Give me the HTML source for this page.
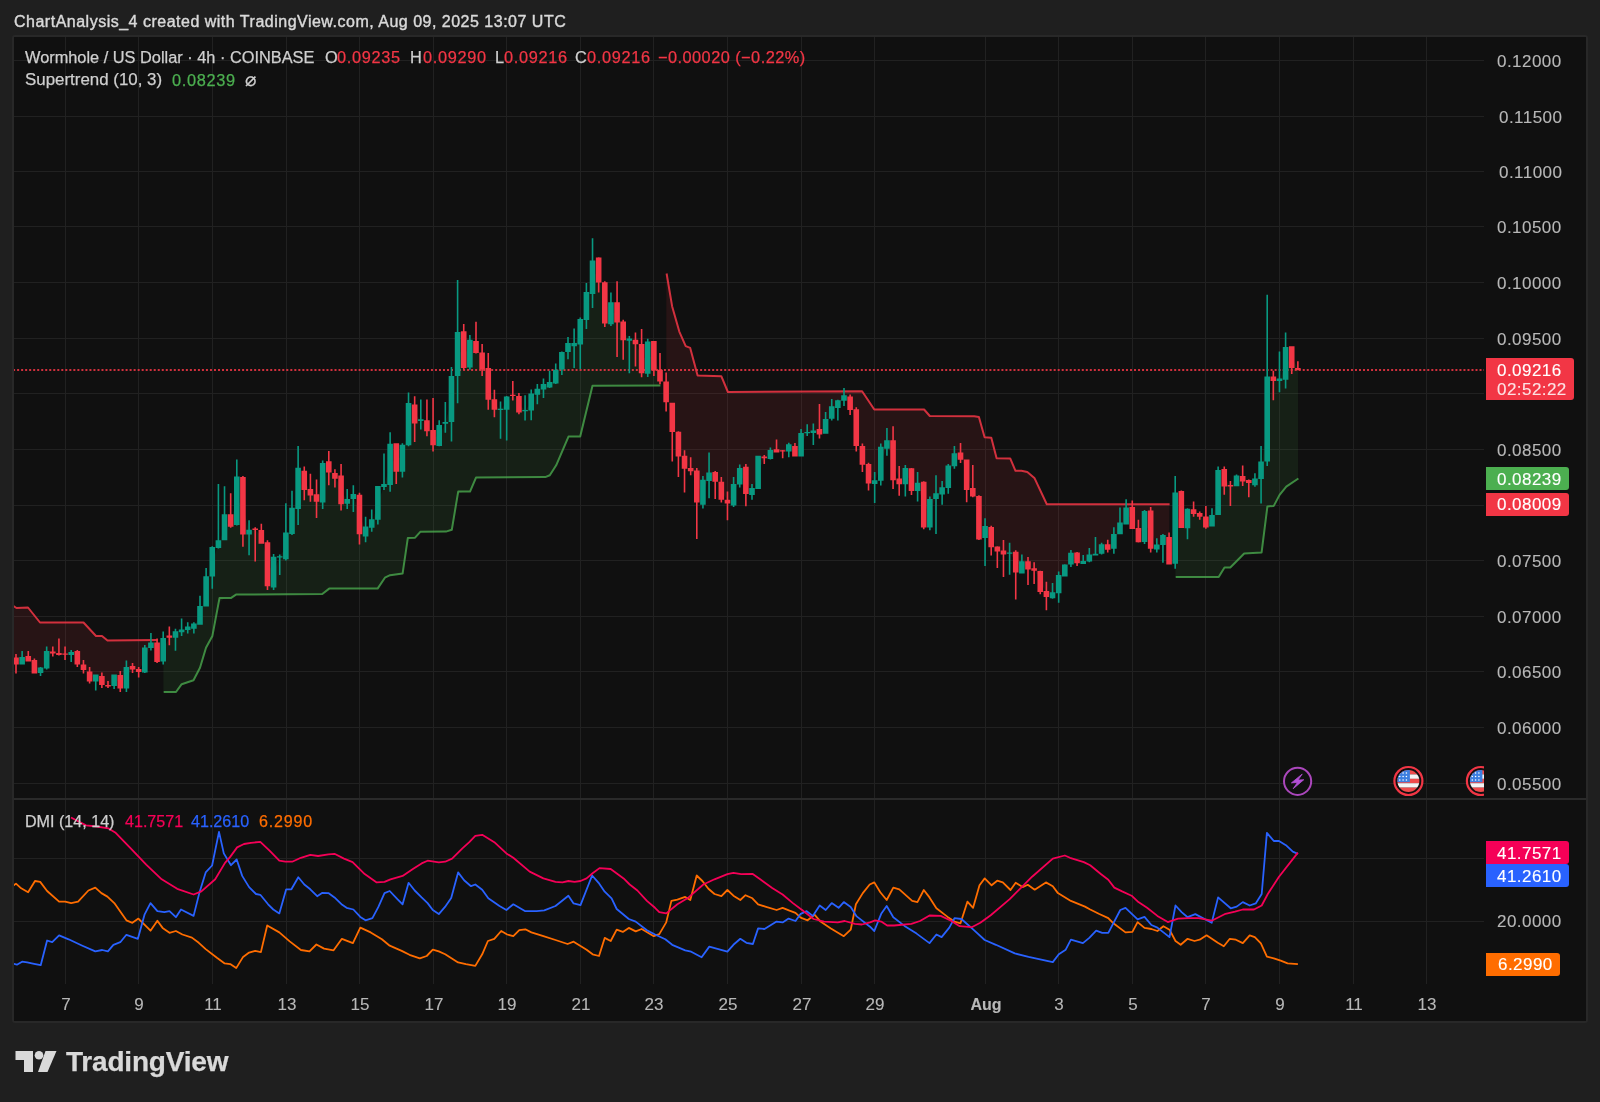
<!DOCTYPE html><html><head><meta charset="utf-8"><style>
html,body{margin:0;padding:0;background:#1f1f1f;width:1600px;height:1102px;overflow:hidden}
*{box-sizing:border-box}
.t{position:absolute;will-change:transform;-webkit-text-stroke:0.25px currentColor;font-family:"Liberation Sans",sans-serif;white-space:pre;line-height:1}
svg{position:absolute;left:0;top:0}

</style></head><body>
<svg width="1600" height="1102" viewBox="0 0 1600 1102">
<defs><clipPath id="cp"><rect x="14" y="37" width="1470" height="762"/></clipPath>
<clipPath id="cd"><rect x="14" y="799" width="1470" height="187"/></clipPath></defs>
<rect x="12" y="35" width="1576" height="988" rx="3" fill="#282828"/>
<rect x="14" y="37" width="1572" height="984" fill="#101010"/>
<path d="M14 60.5H1484M14 116.5H1484M14 171.5H1484M14 226.5H1484M14 282.5H1484M14 338.5H1484M14 393.5H1484M14 449.5H1484M14 505.5H1484M14 560.5H1484M14 616.5H1484M14 671.5H1484M14 727.5H1484M14 783.5H1484M14 858.5H1484M14 921.5H1484M65.5 37V984M138.5 37V984M212.5 37V984M286.5 37V984M359.5 37V984M433.5 37V984M506.5 37V984M580.5 37V984M653.5 37V984M727.5 37V984M801.5 37V984M874.5 37V984M985.5 37V984M1058.5 37V984M1132.5 37V984M1205.5 37V984M1279.5 37V984M1353.5 37V984M1426.5 37V984" stroke="#212121" stroke-width="1" fill="none" shape-rendering="crispEdges"/>
<rect x="14" y="798" width="1572" height="2" fill="#2a2a2a"/>
<g clip-path="url(#cp)">
<polygon points="10.1,604.0 16.2,607.8 22.3,607.7 28.5,608.1 34.6,615.7 40.7,622.5 46.9,622.5 53.0,622.5 59.1,622.5 65.3,622.5 71.4,622.5 77.5,622.5 83.7,622.7 89.8,629.3 95.9,635.9 102.1,636.1 108.2,640.5 114.3,640.4 120.5,640.4 126.6,640.3 132.7,640.2 138.9,640.2 145.0,640.1 151.1,640.1 157.3,640.0 157.3,652.2 151.1,645.2 145.0,660.0 138.9,670.5 132.7,667.8 126.6,677.8 120.5,681.8 114.3,680.2 108.2,685.8 102.1,680.5 95.9,678.0 89.8,676.5 83.7,667.2 77.5,657.8 71.4,653.5 65.3,654.0 59.1,654.0 53.0,652.5 46.9,659.8 40.7,670.2 34.6,666.8 28.5,658.8 22.3,660.8 16.2,661.0 10.1,661.0" fill="#f23645" fill-opacity="0.1"/>
<polygon points="163.4,692.0 169.5,692.0 175.7,692.0 181.8,684.2 187.9,682.1 194.1,679.1 200.2,667.0 206.3,647.1 212.5,635.5 218.6,602.9 224.7,598.1 230.9,598.1 237.0,594.6 243.1,594.6 249.3,594.5 255.4,594.5 261.5,594.4 267.7,594.4 273.8,594.3 279.9,594.3 286.1,594.3 292.2,594.2 298.3,594.2 304.5,594.1 310.6,594.1 316.7,594.0 322.9,593.6 329.0,588.8 335.1,588.6 341.3,588.6 347.4,588.6 353.5,588.6 359.7,588.6 365.8,588.6 371.9,588.6 378.1,587.9 384.2,578.7 390.3,575.2 396.5,574.4 402.6,573.6 408.7,538.0 414.9,537.7 421.0,531.8 427.1,531.7 433.3,531.7 439.4,531.7 445.5,531.6 451.7,529.8 457.8,494.0 463.9,491.6 470.1,491.4 476.2,477.6 482.3,477.6 488.5,477.5 494.6,477.5 500.7,477.4 506.9,477.4 513.0,477.3 519.1,477.3 525.3,477.2 531.4,477.2 537.5,477.2 543.7,477.1 549.8,475.3 555.9,465.7 562.1,451.6 568.2,437.3 574.3,436.6 580.5,435.5 586.6,410.2 592.7,385.8 598.9,385.8 605.0,385.7 611.1,385.7 617.3,385.7 623.4,385.7 629.5,385.6 635.7,385.6 641.8,385.6 647.9,385.6 654.1,385.5 660.2,385.5 660.2,375.6 654.1,355.8 647.9,357.6 641.8,358.6 635.7,342.0 629.5,339.6 623.4,331.0 617.3,312.4 611.1,313.2 605.0,302.8 598.9,270.1 592.7,277.2 586.6,306.0 580.5,331.7 574.3,344.5 568.2,347.4 562.1,360.7 555.9,376.6 549.8,384.9 543.7,386.6 537.5,391.8 531.4,402.0 525.3,410.6 519.1,404.2 513.0,395.1 506.9,403.1 500.7,409.2 494.6,404.4 488.5,383.9 482.3,360.9 476.2,347.1 470.1,353.7 463.9,349.6 457.8,354.1 451.7,399.1 445.5,422.9 439.4,435.4 433.3,437.6 427.1,425.8 421.0,420.0 414.9,414.0 408.7,424.1 402.6,458.2 396.5,457.5 390.3,464.4 384.2,485.4 378.1,502.9 371.9,523.5 365.8,531.5 359.7,514.5 353.5,496.5 347.4,501.3 341.3,489.9 335.1,475.9 329.0,466.9 322.9,482.8 316.7,498.1 310.6,492.3 304.5,480.4 298.3,488.4 292.2,520.8 286.1,545.9 279.9,556.8 273.8,572.1 267.7,564.2 261.5,537.0 255.4,529.3 249.3,532.0 243.1,505.7 237.0,500.8 230.9,520.5 224.7,527.3 218.6,544.2 212.5,561.6 206.3,591.3 200.2,615.3 194.1,626.2 187.9,628.2 181.8,630.9 175.7,634.5 169.5,636.6 163.4,649.8" fill="#4caf50" fill-opacity="0.1"/>
<polygon points="666.3,273.5 672.5,307.5 678.6,329.1 684.7,343.9 690.9,350.4 697.0,373.4 703.1,375.7 709.3,375.9 715.4,376.1 721.5,376.8 727.7,391.4 733.8,392.0 739.9,391.9 746.1,391.9 752.2,391.9 758.3,391.8 764.5,391.8 770.6,391.7 776.7,391.7 782.9,391.7 789.0,391.6 795.1,391.6 801.3,391.6 807.4,391.5 813.5,391.5 819.7,391.5 825.8,391.4 831.9,391.4 838.1,391.3 844.2,391.3 850.3,391.3 856.5,391.2 862.6,391.9 868.7,401.1 874.9,409.5 881.0,409.5 887.1,409.5 893.3,409.5 899.4,409.5 905.5,409.5 911.7,409.5 917.8,409.5 923.9,409.5 930.1,416.0 936.2,416.0 942.3,416.1 948.5,416.1 954.6,416.1 960.7,416.1 966.9,416.2 973.0,416.2 979.1,417.7 985.3,437.3 991.4,438.2 997.5,458.2 1003.7,458.3 1009.8,458.4 1015.9,470.8 1022.1,470.9 1028.2,472.7 1034.3,477.8 1040.5,490.8 1046.6,503.8 1052.7,504.2 1058.9,504.2 1065.0,504.2 1071.1,504.2 1077.3,504.2 1083.4,504.2 1089.5,504.2 1095.7,504.2 1101.8,504.2 1107.9,504.2 1114.1,504.2 1120.2,504.2 1126.3,504.2 1132.5,504.2 1138.6,504.2 1144.7,504.2 1150.9,504.2 1157.0,504.2 1163.1,504.2 1169.3,504.2 1169.3,550.6 1163.1,540.0 1157.0,547.0 1150.9,529.7 1144.7,526.5 1138.6,535.1 1132.5,518.0 1126.3,516.0 1120.2,528.3 1114.1,541.4 1107.9,547.0 1101.8,549.0 1095.7,554.6 1089.5,558.0 1083.4,562.5 1077.3,557.8 1071.1,558.7 1065.0,570.5 1058.9,584.2 1052.7,595.3 1046.6,593.9 1040.5,581.5 1034.3,569.5 1028.2,565.3 1022.1,567.4 1015.9,562.0 1009.8,553.0 1003.7,552.5 997.5,549.0 991.4,537.1 985.3,532.1 979.1,517.6 973.0,492.2 966.9,474.8 960.7,456.1 954.6,459.8 948.5,476.7 942.3,490.8 936.2,496.1 930.1,513.3 923.9,504.7 917.8,486.9 911.7,479.7 905.5,476.1 899.4,481.5 893.3,460.2 887.1,444.4 881.0,463.7 874.9,482.1 868.7,473.7 862.6,455.3 856.5,427.5 850.3,403.2 844.2,398.0 838.1,404.0 831.9,412.4 825.8,426.4 819.7,431.8 813.5,431.6 807.4,432.4 801.3,444.7 795.1,451.2 789.0,448.0 782.9,451.0 776.7,450.8 770.6,454.5 764.5,457.4 758.3,472.3 752.2,491.4 746.1,480.4 739.9,476.3 733.8,494.8 727.7,501.7 721.5,490.8 715.4,476.9 709.3,476.8 703.1,492.2 697.0,486.5 690.9,469.6 684.7,462.2 678.6,444.1 672.5,417.4 666.3,391.9" fill="#f23645" fill-opacity="0.1"/>
<polygon points="1175.4,577.0 1181.5,577.0 1187.7,577.0 1193.8,577.0 1199.9,577.0 1206.1,577.0 1212.2,577.0 1218.3,577.0 1224.5,567.6 1230.6,567.2 1236.7,561.0 1242.9,554.8 1249.0,553.2 1255.1,552.8 1261.3,552.4 1267.4,506.5 1273.5,505.9 1279.7,494.8 1285.8,487.3 1291.9,482.9 1298.1,478.7 1298.1,369.1 1291.9,357.1 1285.8,363.4 1279.7,379.8 1273.5,378.6 1267.4,418.9 1261.3,470.2 1255.1,481.8 1249.0,481.5 1242.9,478.8 1236.7,480.9 1230.6,485.8 1224.5,477.8 1218.3,492.6 1212.2,520.8 1206.1,522.0 1199.9,514.8 1193.8,511.6 1187.7,518.5 1181.5,509.5 1175.4,528.1" fill="#4caf50" fill-opacity="0.1"/>
<polyline points="10.4,604.0 16.5,608.0 28.0,607.5 40.0,622.5 83.5,622.5 96.0,636.0 102.0,636.0 107.5,640.5 157.6,640.0" fill="none" stroke="#f23645" stroke-width="2" stroke-opacity="0.85" stroke-linejoin="round"/>
<polyline points="163.7,692.0 176.0,692.0 181.7,684.2 193.5,680.2 200.0,667.7 206.0,647.7 212.4,635.9 219.5,598.1 230.8,598.1 236.0,594.6 322.3,594.0 329.2,588.6 377.6,588.6 384.9,577.7 390.1,575.2 402.6,573.6 407.8,538.1 415.1,537.7 420.3,531.8 446.0,531.6 451.8,529.8 458.2,491.6 470.0,491.6 476.0,477.6 545.3,477.1 549.8,475.3 556.2,465.3 568.5,436.6 580.2,436.6 592.5,385.8 660.4,385.5" fill="none" stroke="#4caf50" stroke-width="2" stroke-opacity="0.76" stroke-linejoin="round"/>
<polyline points="666.6,273.5 672.1,306.2 679.3,331.6 685.7,346.1 690.2,347.9 697.6,375.6 721.3,376.2 727.9,392.0 862.1,391.2 874.3,409.5 924.1,409.5 929.8,416.0 974.2,416.2 978.9,416.9 984.6,437.2 991.3,437.8 996.6,458.2 1010.2,458.4 1015.5,470.8 1021.4,470.8 1027.3,472.0 1034.4,477.9 1046.8,504.2 1169.6,504.2" fill="none" stroke="#f23645" stroke-width="2" stroke-opacity="0.85" stroke-linejoin="round"/>
<polyline points="1175.7,577.0 1218.7,577.0 1224.5,567.5 1230.3,567.5 1244.2,553.5 1261.6,552.4 1267.4,506.5 1273.8,505.9 1279.6,494.9 1286.3,486.7 1298.4,478.5" fill="none" stroke="#4caf50" stroke-width="2" stroke-opacity="0.76" stroke-linejoin="round"/>
<path d="M13.1 370H1484" stroke="#f23645" stroke-width="2" stroke-dasharray="2 2.0176" stroke-opacity="0.85" fill="none"/>
<path d="M21.33 651.0h1.60v13.5h-1.60zM19.33 657.0h5.60v7.5h-5.60zM39.73 667.0h1.60v9.0h-1.60zM37.73 667.5h5.60v5.5h-5.60zM45.87 646.5h1.60v23.0h-1.60zM43.87 651.0h5.60v17.5h-5.60zM70.40 650.0h1.60v12.0h-1.60zM68.40 652.0h5.60v3.0h-5.60zM94.93 674.5h1.60v16.0h-1.60zM92.93 674.5h5.60v7.0h-5.60zM113.33 674.5h1.60v14.5h-1.60zM111.33 674.5h5.60v11.5h-5.60zM125.60 660.5h1.60v31.5h-1.60zM123.60 667.0h5.60v21.5h-5.60zM144.00 645.0h1.60v28.0h-1.60zM142.00 647.5h5.60v25.0h-5.60zM150.13 633.0h1.60v17.5h-1.60zM148.13 642.5h5.60v5.5h-5.60zM162.40 631.5h1.60v33.0h-1.60zM160.40 638.0h5.60v23.5h-5.60zM174.67 628.8h1.60v21.9h-1.60zM172.67 631.2h5.60v6.6h-5.60zM180.80 618.6h1.60v17.3h-1.60zM178.80 629.5h5.60v2.8h-5.60zM186.93 622.2h1.60v11.3h-1.60zM184.93 626.4h5.60v3.6h-5.60zM193.07 622.2h1.60v11.3h-1.60zM191.07 623.6h5.60v5.2h-5.60zM199.20 595.8h1.60v29.0h-1.60zM197.20 605.9h5.60v18.9h-5.60zM205.33 568.1h1.60v38.3h-1.60zM203.33 576.2h5.60v30.2h-5.60zM211.47 546.2h1.60v42.5h-1.60zM209.47 546.9h5.60v29.5h-5.60zM217.60 484.1h1.60v64.5h-1.60zM215.60 540.3h5.60v7.8h-5.60zM223.73 486.3h1.60v54.0h-1.60zM221.73 514.3h5.60v26.0h-5.60zM236.00 459.4h1.60v66.0h-1.60zM234.00 476.6h5.60v48.4h-5.60zM248.27 520.2h1.60v35.0h-1.60zM246.27 529.7h5.60v4.7h-5.60zM272.80 554.0h1.60v35.9h-1.60zM270.80 556.8h5.60v30.7h-5.60zM278.93 554.5h1.60v20.5h-1.60zM276.93 556.3h5.60v1.2h-5.60zM285.07 503.2h1.60v57.2h-1.60zM283.07 532.5h5.60v26.7h-5.60zM291.20 490.7h1.60v44.4h-1.60zM289.20 507.7h5.60v26.2h-5.60zM297.33 445.9h1.60v79.1h-1.60zM295.33 467.8h5.60v41.1h-5.60zM321.87 460.5h1.60v48.4h-1.60zM319.87 463.0h5.60v39.6h-5.60zM346.40 489.1h1.60v19.8h-1.60zM344.40 498.9h5.60v4.8h-5.60zM352.53 485.3h1.60v26.7h-1.60zM350.53 493.9h5.60v5.2h-5.60zM364.80 516.8h1.60v25.5h-1.60zM362.80 526.6h5.60v9.8h-5.60zM370.93 509.5h1.60v22.3h-1.60zM368.93 519.3h5.60v8.4h-5.60zM377.07 486.0h1.60v38.5h-1.60zM375.07 486.0h5.60v33.7h-5.60zM383.20 453.6h1.60v36.5h-1.60zM381.20 483.9h5.60v3.1h-5.60zM389.33 432.3h1.60v59.5h-1.60zM387.33 443.8h5.60v41.1h-5.60zM401.60 443.2h1.60v34.4h-1.60zM399.60 444.7h5.60v27.1h-5.60zM407.73 392.5h1.60v53.8h-1.60zM405.73 402.9h5.60v42.4h-5.60zM420.00 399.4h1.60v30.2h-1.60zM418.00 419.2h5.60v1.7h-5.60zM438.40 420.2h1.60v26.1h-1.60zM436.40 425.0h5.60v20.9h-5.60zM444.53 402.1h1.60v30.7h-1.60zM442.53 421.9h5.60v1.9h-5.60zM450.67 367.0h1.60v74.4h-1.60zM448.67 376.1h5.60v45.9h-5.60zM456.80 280.0h1.60v123.3h-1.60zM454.80 332.0h5.60v44.1h-5.60zM469.07 335.0h1.60v34.8h-1.60zM467.07 339.8h5.60v27.8h-5.60zM499.73 401.5h1.60v37.2h-1.60zM497.73 408.8h5.60v1.2h-5.60zM505.87 396.1h1.60v44.4h-1.60zM503.87 396.6h5.60v13.1h-5.60zM524.27 395.2h1.60v25.4h-1.60zM522.27 410.0h5.60v1.2h-5.60zM530.40 389.4h1.60v30.8h-1.60zM528.40 393.4h5.60v17.2h-5.60zM536.53 383.9h1.60v20.3h-1.60zM534.53 388.8h5.60v6.0h-5.60zM542.67 378.5h1.60v19.4h-1.60zM540.67 383.9h5.60v5.5h-5.60zM548.80 370.7h1.60v17.2h-1.60zM546.80 382.1h5.60v5.5h-5.60zM554.93 363.4h1.60v20.5h-1.60zM552.93 369.8h5.60v13.6h-5.60zM561.07 351.6h1.60v23.3h-1.60zM559.07 352.0h5.60v17.4h-5.60zM567.20 337.1h1.60v22.2h-1.60zM565.20 342.9h5.60v9.1h-5.60zM573.33 328.4h1.60v39.6h-1.60zM571.33 342.9h5.60v3.3h-5.60zM579.47 317.5h1.60v51.4h-1.60zM577.47 319.0h5.60v25.4h-5.60zM585.60 283.1h1.60v45.9h-1.60zM583.60 292.1h5.60v27.8h-5.60zM591.73 238.2h1.60v69.8h-1.60zM589.73 260.5h5.60v33.4h-5.60zM610.13 292.6h1.60v33.5h-1.60zM608.13 302.2h5.60v22.1h-5.60zM628.53 336.1h1.60v37.2h-1.60zM626.53 338.5h5.60v2.2h-5.60zM646.93 338.8h1.60v38.1h-1.60zM644.93 341.6h5.60v32.1h-5.60zM702.13 476.1h1.60v32.3h-1.60zM700.13 479.7h5.60v25.0h-5.60zM708.27 452.4h1.60v45.8h-1.60zM706.27 472.5h5.60v8.5h-5.60zM732.80 476.9h1.60v30.2h-1.60zM730.80 484.0h5.60v21.5h-5.60zM738.93 464.4h1.60v23.2h-1.60zM736.93 468.0h5.60v16.6h-5.60zM751.20 484.0h1.60v15.8h-1.60zM749.20 487.9h5.60v7.0h-5.60zM757.33 455.7h1.60v33.2h-1.60zM755.33 455.7h5.60v33.2h-5.60zM769.60 447.6h1.60v11.9h-1.60zM767.60 450.0h5.60v9.0h-5.60zM788.00 442.7h1.60v14.6h-1.60zM786.00 444.3h5.60v7.3h-5.60zM800.27 429.1h1.60v27.4h-1.60zM798.27 432.9h5.60v23.6h-5.60zM806.40 424.2h1.60v11.9h-1.60zM804.40 432.0h5.60v1.2h-5.60zM812.53 423.6h1.60v21.5h-1.60zM810.53 430.4h5.60v2.5h-5.60zM824.80 412.1h1.60v21.6h-1.60zM822.80 419.0h5.60v14.7h-5.60zM830.93 399.1h1.60v21.5h-1.60zM828.93 406.2h5.60v12.5h-5.60zM837.07 399.7h1.60v20.9h-1.60zM835.07 400.2h5.60v7.7h-5.60zM843.20 388.0h1.60v17.9h-1.60zM841.20 395.3h5.60v5.4h-5.60zM873.87 472.0h1.60v31.1h-1.60zM871.87 480.2h5.60v3.8h-5.60zM880.00 443.5h1.60v42.1h-1.60zM878.00 446.7h5.60v34.0h-5.60zM886.13 428.0h1.60v27.7h-1.60zM884.13 440.2h5.60v8.5h-5.60zM904.53 465.0h1.60v31.5h-1.60zM902.53 468.0h5.60v16.3h-5.60zM916.80 472.0h1.60v29.4h-1.60zM914.80 482.7h5.60v8.4h-5.60zM929.07 496.5h1.60v33.8h-1.60zM927.07 499.0h5.60v28.6h-5.60zM935.20 475.3h1.60v58.8h-1.60zM933.20 493.3h5.60v5.7h-5.60zM941.33 481.0h1.60v23.7h-1.60zM939.33 487.2h5.60v7.2h-5.60zM947.47 463.9h1.60v29.9h-1.60zM945.47 465.5h5.60v22.4h-5.60zM953.60 445.9h1.60v22.9h-1.60zM951.60 453.3h5.60v13.0h-5.60zM984.27 518.3h1.60v47.7h-1.60zM982.27 526.1h5.60v12.0h-5.60zM1008.80 542.8h1.60v32.0h-1.60zM1006.80 552.4h5.60v1.3h-5.60zM1021.07 554.4h1.60v19.1h-1.60zM1019.07 561.2h5.60v12.3h-5.60zM1051.73 583.0h1.60v15.7h-1.60zM1049.73 592.3h5.60v6.0h-5.60zM1057.87 571.4h1.60v31.4h-1.60zM1055.87 575.1h5.60v18.1h-5.60zM1064.00 564.2h1.60v12.3h-1.60zM1062.00 564.6h5.60v11.9h-5.60zM1070.13 550.1h1.60v16.9h-1.60zM1068.13 552.8h5.60v11.8h-5.60zM1082.40 555.1h1.60v8.9h-1.60zM1080.40 561.0h5.60v3.0h-5.60zM1088.53 547.9h1.60v14.4h-1.60zM1086.53 554.4h5.60v7.1h-5.60zM1094.67 537.0h1.60v18.5h-1.60zM1092.67 553.7h5.60v1.8h-5.60zM1100.80 542.8h1.60v11.6h-1.60zM1098.80 544.2h5.60v9.5h-5.60zM1113.07 527.2h1.60v26.5h-1.60zM1111.07 534.0h5.60v14.7h-5.60zM1119.20 507.4h1.60v26.9h-1.60zM1117.20 522.4h5.60v11.9h-5.60zM1125.33 499.3h1.60v25.2h-1.60zM1123.33 507.4h5.60v17.1h-5.60zM1143.73 509.9h1.60v34.0h-1.60zM1141.73 511.0h5.60v30.9h-5.60zM1156.00 538.2h1.60v14.2h-1.60zM1154.00 544.6h5.60v4.8h-5.60zM1162.13 534.1h1.60v28.6h-1.60zM1160.13 535.1h5.60v9.9h-5.60zM1174.40 475.9h1.60v92.8h-1.60zM1172.40 492.5h5.60v71.2h-5.60zM1186.67 508.3h1.60v30.9h-1.60zM1184.67 508.8h5.60v19.5h-5.60zM1211.20 508.3h1.60v18.2h-1.60zM1209.20 515.1h5.60v11.4h-5.60zM1217.33 466.6h1.60v48.5h-1.60zM1215.33 470.1h5.60v45.0h-5.60zM1235.73 474.6h1.60v11.7h-1.60zM1233.73 475.5h5.60v10.8h-5.60zM1254.13 473.2h1.60v13.6h-1.60zM1252.13 478.4h5.60v6.8h-5.60zM1260.27 446.0h1.60v57.4h-1.60zM1258.27 461.4h5.60v17.7h-5.60zM1266.40 294.7h1.60v171.2h-1.60zM1264.40 376.4h5.60v85.0h-5.60zM1278.67 351.4h1.60v40.8h-1.60zM1276.67 378.6h5.60v2.3h-5.60zM1284.80 332.6h1.60v55.8h-1.60zM1282.80 346.9h5.60v32.9h-5.60z" fill="#089981"/>
<path d="M15.20 654.0h1.60v19.5h-1.60zM13.20 657.5h5.60v7.0h-5.60zM27.47 651.0h1.60v10.5h-1.60zM25.47 656.0h5.60v5.5h-5.60zM33.60 658.5h1.60v15.0h-1.60zM31.60 660.0h5.60v13.5h-5.60zM52.00 646.5h1.60v10.0h-1.60zM50.00 651.5h5.60v2.0h-5.60zM58.13 638.5h1.60v17.0h-1.60zM56.13 653.0h5.60v2.0h-5.60zM64.27 646.5h1.60v13.5h-1.60zM62.27 653.5h5.60v1.2h-5.60zM76.53 650.0h1.60v17.0h-1.60zM74.53 651.0h5.60v13.5h-5.60zM82.67 660.0h1.60v13.5h-1.60zM80.67 664.5h5.60v5.5h-5.60zM88.80 667.0h1.60v16.5h-1.60zM86.80 671.5h5.60v10.0h-5.60zM101.07 672.5h1.60v15.5h-1.60zM99.07 676.0h5.60v9.0h-5.60zM107.20 681.0h1.60v7.0h-1.60zM105.20 685.0h5.60v1.5h-5.60zM119.47 671.0h1.60v21.0h-1.60zM117.47 675.0h5.60v13.5h-5.60zM131.73 663.0h1.60v10.0h-1.60zM129.73 666.0h5.60v3.5h-5.60zM137.87 667.0h1.60v10.5h-1.60zM135.87 669.0h5.60v3.0h-5.60zM156.27 638.5h1.60v24.5h-1.60zM154.27 642.5h5.60v19.5h-5.60zM168.53 626.4h1.60v18.9h-1.60zM166.53 635.4h5.60v2.4h-5.60zM229.87 493.3h1.60v34.5h-1.60zM227.87 514.3h5.60v12.5h-5.60zM242.13 475.9h1.60v70.8h-1.60zM240.13 477.0h5.60v57.4h-5.60zM254.40 527.3h1.60v34.2h-1.60zM252.40 528.5h5.60v1.6h-5.60zM260.53 523.8h1.60v20.0h-1.60zM258.53 530.1h5.60v13.7h-5.60zM266.67 540.3h1.60v49.6h-1.60zM264.67 542.2h5.60v44.1h-5.60zM303.47 466.4h1.60v33.8h-1.60zM301.47 470.7h5.60v19.3h-5.60zM309.60 473.7h1.60v28.1h-1.60zM307.60 489.1h5.60v6.4h-5.60zM315.73 479.6h1.60v38.3h-1.60zM313.73 494.3h5.60v7.5h-5.60zM328.00 451.1h1.60v34.2h-1.60zM326.00 461.3h5.60v11.1h-5.60zM334.13 469.3h1.60v18.3h-1.60zM332.13 473.0h5.60v5.7h-5.60zM340.27 464.0h1.60v46.6h-1.60zM338.27 475.5h5.60v28.8h-5.60zM358.67 492.8h1.60v51.6h-1.60zM356.67 494.7h5.60v39.6h-5.60zM395.47 443.2h1.60v40.7h-1.60zM393.47 443.2h5.60v28.6h-5.60zM413.87 396.3h1.60v45.8h-1.60zM411.87 404.6h5.60v18.8h-5.60zM426.13 399.4h1.60v36.9h-1.60zM424.13 420.2h5.60v11.1h-5.60zM432.27 397.9h1.60v53.6h-1.60zM430.27 430.0h5.60v15.3h-5.60zM462.93 324.1h1.60v45.7h-1.60zM460.93 331.3h5.60v36.7h-5.60zM475.20 321.7h1.60v31.7h-1.60zM473.20 341.1h5.60v12.0h-5.60zM481.33 344.0h1.60v32.1h-1.60zM479.33 352.5h5.60v16.9h-5.60zM487.47 353.1h1.60v56.6h-1.60zM485.47 368.0h5.60v31.7h-5.60zM493.60 389.7h1.60v27.6h-1.60zM491.60 399.2h5.60v10.5h-5.60zM512.00 381.0h1.60v19.6h-1.60zM510.00 394.8h5.60v1.2h-5.60zM518.13 393.0h1.60v21.2h-1.60zM516.13 396.1h5.60v16.3h-5.60zM597.87 257.2h1.60v35.4h-1.60zM595.87 257.6h5.60v25.0h-5.60zM604.00 281.2h1.60v45.9h-1.60zM602.00 282.2h5.60v41.2h-5.60zM616.27 281.2h1.60v75.8h-1.60zM614.27 302.2h5.60v20.3h-5.60zM622.40 319.8h1.60v39.9h-1.60zM620.40 321.6h5.60v18.7h-5.60zM634.67 332.5h1.60v33.9h-1.60zM632.67 339.7h5.60v4.6h-5.60zM640.80 328.9h1.60v48.4h-1.60zM638.80 343.9h5.60v29.4h-5.60zM653.07 341.0h1.60v35.0h-1.60zM651.07 341.0h5.60v29.6h-5.60zM659.20 353.0h1.60v31.2h-1.60zM657.20 369.7h5.60v11.8h-5.60zM665.33 372.4h1.60v39.0h-1.60zM663.33 381.5h5.60v20.8h-5.60zM671.47 402.7h1.60v58.7h-1.60zM669.47 402.7h5.60v29.3h-5.60zM677.60 431.2h1.60v45.7h-1.60zM675.60 431.7h5.60v24.8h-5.60zM683.73 450.3h1.60v42.1h-1.60zM681.73 455.7h5.60v13.1h-5.60zM689.87 457.3h1.60v18.0h-1.60zM687.87 468.0h5.60v3.2h-5.60zM696.00 468.0h1.60v71.0h-1.60zM694.00 470.4h5.60v32.2h-5.60zM714.40 470.9h1.60v28.1h-1.60zM712.40 472.0h5.60v9.8h-5.60zM720.53 476.9h1.60v25.7h-1.60zM718.53 481.8h5.60v18.0h-5.60zM726.67 491.6h1.60v28.6h-1.60zM724.67 499.8h5.60v3.8h-5.60zM745.07 463.9h1.60v42.4h-1.60zM743.07 466.7h5.60v27.4h-5.60zM763.47 454.9h1.60v9.0h-1.60zM761.47 456.5h5.60v1.7h-5.60zM775.73 439.4h1.60v13.0h-1.60zM773.73 449.2h5.60v3.2h-5.60zM781.87 450.0h1.60v8.2h-1.60zM779.87 450.3h5.60v1.3h-5.60zM794.13 443.1h1.60v13.4h-1.60zM792.13 445.9h5.60v10.6h-5.60zM818.67 404.0h1.60v34.6h-1.60zM816.67 429.1h5.60v5.4h-5.60zM849.33 394.5h1.60v20.4h-1.60zM847.33 396.4h5.60v13.6h-5.60zM855.47 407.2h1.60v44.4h-1.60zM853.47 409.2h5.60v36.7h-5.60zM861.60 443.5h1.60v28.5h-1.60zM859.60 445.9h5.60v18.8h-5.60zM867.73 462.7h1.60v27.8h-1.60zM865.73 463.9h5.60v19.6h-5.60zM892.27 426.3h1.60v62.6h-1.60zM890.27 440.2h5.60v40.0h-5.60zM898.40 466.0h1.60v29.7h-1.60zM896.40 478.6h5.60v5.7h-5.60zM910.67 468.0h1.60v26.9h-1.60zM908.67 468.3h5.60v22.8h-5.60zM922.93 481.3h1.60v47.9h-1.60zM920.93 481.8h5.60v45.8h-5.60zM959.73 443.1h1.60v20.0h-1.60zM957.73 452.4h5.60v7.4h-5.60zM965.87 459.5h1.60v42.7h-1.60zM963.87 459.5h5.60v30.5h-5.60zM972.00 465.0h1.60v32.3h-1.60zM970.00 487.9h5.60v8.6h-5.60zM978.13 495.2h1.60v44.9h-1.60zM976.13 495.9h5.60v43.5h-5.60zM990.40 525.8h1.60v29.7h-1.60zM988.40 526.9h5.60v20.4h-5.60zM996.53 546.3h1.60v21.7h-1.60zM994.53 546.5h5.60v4.9h-5.60zM1002.67 540.1h1.60v36.8h-1.60zM1000.67 550.6h5.60v3.8h-5.60zM1014.93 550.3h1.60v49.1h-1.60zM1012.93 551.7h5.60v20.7h-5.60zM1027.20 556.9h1.60v28.2h-1.60zM1025.20 561.2h5.60v8.2h-5.60zM1033.33 562.3h1.60v21.8h-1.60zM1031.33 568.3h5.60v2.5h-5.60zM1039.47 570.8h1.60v23.4h-1.60zM1037.47 571.0h5.60v20.9h-5.60zM1045.60 581.7h1.60v28.6h-1.60zM1043.60 590.9h5.60v6.0h-5.60zM1076.27 552.0h1.60v14.0h-1.60zM1074.27 552.4h5.60v10.9h-5.60zM1106.93 539.7h1.60v12.7h-1.60zM1104.93 544.2h5.60v5.5h-5.60zM1131.47 500.4h1.60v28.6h-1.60zM1129.47 506.9h5.60v22.1h-5.60zM1137.60 519.7h1.60v22.9h-1.60zM1135.60 527.9h5.60v14.4h-5.60zM1149.87 506.9h1.60v45.5h-1.60zM1147.87 510.6h5.60v38.1h-5.60zM1168.27 532.4h1.60v32.0h-1.60zM1166.27 536.9h5.60v27.5h-5.60zM1180.53 490.6h1.60v37.3h-1.60zM1178.53 491.1h5.60v36.8h-5.60zM1192.80 501.5h1.60v15.2h-1.60zM1190.80 509.2h5.60v4.8h-5.60zM1198.93 511.5h1.60v8.2h-1.60zM1196.93 512.9h5.60v3.8h-5.60zM1205.07 506.1h1.60v22.6h-1.60zM1203.07 516.4h5.60v11.2h-5.60zM1223.47 466.6h1.60v28.1h-1.60zM1221.47 469.1h5.60v17.4h-5.60zM1229.60 481.0h1.60v25.1h-1.60zM1227.60 485.1h5.60v1.4h-5.60zM1241.87 465.5h1.60v20.4h-1.60zM1239.87 476.1h5.60v5.3h-5.60zM1248.00 479.5h1.60v17.7h-1.60zM1246.00 480.0h5.60v3.0h-5.60zM1272.53 370.7h1.60v29.5h-1.60zM1270.53 376.4h5.60v4.5h-5.60zM1290.93 346.2h1.60v27.9h-1.60zM1288.93 346.2h5.60v21.8h-5.60zM1297.07 361.2h1.60v9.0h-1.60zM1295.07 368.0h5.60v2.2h-5.60z" fill="#f23645"/>
</g>
<g clip-path="url(#cd)">
<polyline points="10.0,886.0 13.8,885.3 16.0,883.6 21.2,888.3 28.1,892.2 35.0,881.0 40.2,881.9 47.1,891.0 59.1,901.7 65.2,901.7 71.2,903.1 78.1,901.7 88.4,890.5 95.3,887.6 101.4,893.1 107.4,896.6 114.3,903.1 126.4,920.3 132.4,922.8 138.4,918.6 150.5,930.7 157.4,920.7 162.6,927.9 169.5,932.8 175.9,931.0 182.4,934.5 191.9,937.6 198.8,942.8 205.7,949.1 216.9,957.8 224.7,963.4 230.2,964.1 236.2,968.1 243.1,956.9 249.1,952.6 255.2,950.9 260.9,952.1 267.2,925.5 279.3,932.4 289.7,941.4 300.9,950.0 309.5,951.4 316.4,944.5 324.1,948.6 333.6,950.3 341.9,938.8 352.9,943.1 360.3,927.6 370.7,932.4 381.9,939.3 389.7,945.7 401.7,950.9 409.5,954.8 419.8,958.3 426.7,956.0 432.8,949.7 438.8,951.4 445.2,954.3 458.1,962.4 465.9,964.1 475.3,965.9 482.2,954.3 487.9,941.0 494.3,938.8 501.2,931.0 507.2,934.5 513.3,936.2 519.3,930.2 525.3,929.3 531.4,932.4 543.4,936.2 555.5,940.0 567.6,944.0 573.6,941.7 586.6,949.7 592.6,954.3 599.0,956.0 604.7,937.9 610.7,941.0 616.7,929.7 622.8,931.9 628.8,927.9 635.7,931.4 641.7,929.0 653.8,936.2 659.3,934.1 666.2,922.4 671.4,900.9 677.4,899.7 685.2,896.9 690.3,900.0 696.7,875.5 702.4,881.0 708.4,888.8 714.5,894.0 721.4,896.2 727.4,890.0 733.4,895.7 740.3,900.0 745.5,895.2 752.4,898.3 758.1,904.3 765.3,906.6 776.6,910.0 782.6,907.8 789.5,910.7 795.5,912.9 800.7,917.6 807.6,920.3 814.5,914.7 820.5,921.6 830.9,928.4 843.8,936.2 850.7,929.7 855.9,904.3 862.8,893.1 869.7,884.5 874.3,882.4 880.3,892.2 886.7,900.0 893.3,887.6 899.3,889.3 912.2,900.9 917.4,902.1 923.8,890.0 929.5,897.4 936.4,908.3 947.6,916.9 954.5,921.6 960.5,923.3 967.4,901.7 973.1,907.8 979.5,885.3 984.7,878.4 991.6,885.3 997.2,880.7 1002.8,882.4 1010.5,890.0 1015.7,882.8 1022.6,887.1 1027.8,884.8 1034.7,889.7 1045.9,882.4 1052.8,886.2 1057.9,893.1 1070.9,900.9 1085.0,906.6 1090.2,909.5 1098.8,913.8 1108.3,918.1 1113.4,923.3 1125.5,932.4 1132.4,931.9 1137.6,922.1 1144.5,927.9 1151.4,929.0 1157.4,931.0 1163.4,926.2 1169.5,929.7 1175.5,941.0 1180.7,944.8 1187.6,938.8 1194.5,941.0 1199.7,939.7 1206.6,935.3 1217.8,942.8 1223.8,946.2 1229.8,938.8 1235.9,939.7 1242.8,943.1 1249.7,935.3 1254.8,937.1 1260.9,943.4 1266.9,956.6 1273.8,958.3 1280.7,960.7 1287.6,963.4 1297.9,964.1" fill="none" stroke="#ff6d00" stroke-width="1.8" stroke-linejoin="round"/>
<polyline points="10.0,963.0 13.8,963.8 16.9,964.7 22.1,961.7 27.2,962.4 34.1,963.8 40.7,965.2 47.1,940.5 52.2,942.2 59.1,935.3 68.6,939.3 82.4,945.7 95.3,951.4 102.2,950.0 107.9,951.4 113.4,944.8 120.3,942.2 126.4,934.8 137.9,938.8 144.5,914.7 150.5,903.1 157.4,911.2 164.3,912.1 169.5,911.2 175.9,917.2 181.0,909.5 193.6,915.9 199.3,893.1 205.7,872.4 212.1,865.5 219.0,831.9 223.8,853.4 231.0,865.2 236.7,859.5 242.2,875.9 249.1,887.1 256.0,894.0 260.3,894.8 268.1,904.3 273.3,909.5 279.3,913.4 286.2,889.3 291.4,889.3 298.3,877.2 304.3,884.5 310.3,889.3 317.2,896.2 322.4,892.8 328.4,893.1 334.5,897.4 342.2,904.8 346.6,907.8 353.4,909.5 360.3,916.9 365.5,920.3 372.4,918.1 378.4,906.9 384.5,893.1 389.7,891.0 397.4,899.1 402.6,904.3 408.6,882.8 414.7,890.5 421.6,897.4 427.6,903.1 432.8,910.0 438.8,914.1 445.0,906.9 451.2,897.9 458.1,872.4 464.1,880.2 471.0,886.2 475.3,884.5 482.2,889.7 488.3,898.3 499.5,906.0 506.4,910.0 513.3,904.3 525.3,911.2 536.6,911.2 544.3,910.3 555.5,906.0 568.4,895.7 573.6,903.4 580.5,905.2 592.1,875.5 598.6,882.8 604.7,891.7 611.6,898.3 616.7,909.0 628.8,919.0 635.7,921.6 646.9,930.2 655.0,934.5 665.3,939.3 672.2,944.8 685.2,950.3 691.2,951.7 701.6,957.2 709.3,946.6 727.4,951.7 733.4,944.8 740.3,938.8 746.4,942.8 752.9,944.0 758.1,928.4 764.5,929.0 776.6,921.6 782.6,922.4 788.6,918.6 795.5,921.0 800.7,913.8 806.7,911.2 812.8,915.9 819.7,905.5 825.7,910.0 831.7,903.1 838.6,907.8 843.8,902.1 850.7,906.9 856.7,916.4 870.0,926.7 874.3,931.0 881.2,913.8 886.7,906.0 893.3,917.2 904.5,925.9 916.6,933.6 929.5,943.1 936.4,934.5 941.6,937.1 949.3,927.6 954.5,918.1 961.4,919.0 973.4,929.7 984.7,940.0 995.9,944.8 1014.8,953.4 1028.6,956.9 1052.8,962.1 1058.8,954.3 1065.7,949.7 1070.9,939.7 1082.9,943.1 1089.3,937.9 1096.2,930.7 1102.2,932.8 1108.3,932.8 1120.3,910.0 1125.5,907.8 1137.6,919.3 1144.5,916.9 1151.4,925.0 1157.4,927.6 1169.5,937.1 1175.5,905.5 1181.6,912.1 1187.6,917.2 1195.3,914.1 1211.7,922.8 1218.1,897.4 1230.7,908.3 1236.7,906.6 1242.8,902.1 1249.7,905.5 1255.7,903.4 1261.7,894.0 1266.9,832.8 1273.8,841.0 1279.0,841.0 1285.9,845.2 1292.8,851.7 1297.9,853.8" fill="none" stroke="#2962ff" stroke-width="1.8" stroke-linejoin="round"/>
<polyline points="71.0,817.5 86.0,825.4 96.5,826.5 108.5,828.4 115.2,832.4 130.7,848.3 146.2,864.7 161.7,879.3 177.2,888.8 193.6,894.5 201.4,891.4 215.2,879.3 225.0,862.9 230.2,856.9 237.1,847.4 244.0,844.0 250.9,842.8 260.3,841.9 269.8,850.9 279.3,860.7 285.3,861.7 292.2,861.7 300.9,857.8 310.3,854.8 318.1,856.0 328.4,854.3 334.5,853.8 344.0,858.6 352.6,862.1 364.7,874.1 376.7,882.4 384.5,881.9 390.5,879.3 402.6,875.9 412.9,869.0 421.6,863.4 427.6,860.7 438.8,862.4 445.2,861.7 452.1,858.6 462.4,848.3 469.3,842.2 475.3,835.9 482.2,834.8 494.3,842.2 506.4,853.4 513.3,857.8 529.7,871.6 543.4,878.4 555.5,881.9 562.4,882.4 568.4,881.0 574.5,881.9 580.5,881.0 586.6,878.4 592.6,873.3 599.5,868.1 610.7,869.0 623.6,878.4 629.7,884.5 637.4,890.5 646.9,900.9 655.0,907.8 659.3,912.1 666.2,913.4 677.4,904.3 688.6,897.4 703.3,884.5 714.5,879.3 727.4,874.1 733.4,872.8 741.2,874.1 752.4,873.8 760.2,879.3 772.2,887.9 782.6,894.5 792.9,903.1 802.4,910.3 813.6,919.0 824.0,921.6 837.8,922.4 844.7,921.0 855.0,923.8 861.9,924.5 870.0,922.4 875.2,920.3 881.2,921.6 887.2,925.5 894.1,925.5 911.4,923.8 920.0,921.0 929.5,915.5 940.7,915.9 951.0,920.7 959.7,926.2 971.7,927.2 980.3,922.8 990.7,915.2 1009.7,899.1 1021.7,887.1 1032.1,876.7 1052.8,858.6 1064.8,855.5 1070.0,857.8 1083.8,862.1 1090.2,865.2 1100.5,873.8 1108.3,879.7 1114.3,887.6 1122.1,891.4 1131.6,895.7 1138.4,902.1 1147.1,907.8 1157.4,915.9 1167.8,922.1 1178.1,918.6 1188.4,918.1 1198.8,918.1 1211.7,920.7 1225.5,913.8 1235.0,911.7 1242.8,909.5 1254.0,909.5 1261.7,905.5 1267.8,894.0 1279.0,876.7 1297.9,852.6" fill="none" stroke="#f50057" stroke-width="1.8" stroke-linejoin="round"/>
</g>
<path d="M1486 358H1571q3 0 3 3V397q0 3 -3 3H1486z" fill="#f23645"/>
<path d="M1486 467H1566q3 0 3 3V487q0 3 -3 3H1486z" fill="#4caf50"/>
<path d="M1486 493H1566q3 0 3 3V513q0 3 -3 3H1486z" fill="#f23645"/>
<path d="M1486 841H1566q3 0 3 3V861q0 3 -3 3H1486z" fill="#f50057"/>
<path d="M1486 864H1566q3 0 3 3V884q0 3 -3 3H1486z" fill="#2962ff"/>
<path d="M1486 953H1557q3 0 3 3V973q0 3 -3 3H1486z" fill="#ff6d00"/>
<clipPath id="ci"><rect x="13" y="740" width="1471" height="58"/></clipPath><g clip-path="url(#ci)">
<circle cx="1297.6" cy="781.3" r="13.6" fill="#101010" stroke="#ab47bc" stroke-width="2"/>
<path d="M1302.2 774.1L1291.4 782.9L1297.4 782.5L1293.2 788.7L1303.8 779.7L1298.0 780.1Z" fill="#b44fd6" stroke="#b44fd6" stroke-width="0.8" stroke-linejoin="round"/>
<circle cx="1408.4" cy="781" r="14" fill="#101010" stroke="#f23645" stroke-width="2.2"/>
<clipPath id="fl1408"><circle cx="1408.4" cy="781" r="11"/></clipPath>
<g clip-path="url(#fl1408)">
<rect x="1396.4" y="770.0" width="24" height="4.5" fill="#ef4b4b"/>
<rect x="1396.4" y="774.4" width="24" height="4.5" fill="#f4f4f4"/>
<rect x="1396.4" y="778.8" width="24" height="4.5" fill="#ef4b4b"/>
<rect x="1396.4" y="783.2" width="24" height="4.5" fill="#f4f4f4"/>
<rect x="1396.4" y="787.6" width="24" height="4.5" fill="#ef4b4b"/>
<rect x="1396.4" y="770" width="13.5" height="12.2" fill="#3d7fe0"/>
<circle cx="1399.8000000000002" cy="773.0" r="0.8" fill="#fff"/>
<circle cx="1403.1000000000001" cy="773.0" r="0.8" fill="#fff"/>
<circle cx="1406.4" cy="773.0" r="0.8" fill="#fff"/>
<circle cx="1399.8000000000002" cy="776.5" r="0.8" fill="#fff"/>
<circle cx="1403.1000000000001" cy="776.5" r="0.8" fill="#fff"/>
<circle cx="1406.4" cy="776.5" r="0.8" fill="#fff"/>
<circle cx="1399.8000000000002" cy="780.0" r="0.8" fill="#fff"/>
<circle cx="1403.1000000000001" cy="780.0" r="0.8" fill="#fff"/>
<circle cx="1406.4" cy="780.0" r="0.8" fill="#fff"/>
</g>
<circle cx="1480.9" cy="781" r="14" fill="#101010" stroke="#f23645" stroke-width="2.2"/>
<clipPath id="fl1480"><circle cx="1480.9" cy="781" r="11"/></clipPath>
<g clip-path="url(#fl1480)">
<rect x="1468.9" y="770.0" width="24" height="4.5" fill="#ef4b4b"/>
<rect x="1468.9" y="774.4" width="24" height="4.5" fill="#f4f4f4"/>
<rect x="1468.9" y="778.8" width="24" height="4.5" fill="#ef4b4b"/>
<rect x="1468.9" y="783.2" width="24" height="4.5" fill="#f4f4f4"/>
<rect x="1468.9" y="787.6" width="24" height="4.5" fill="#ef4b4b"/>
<rect x="1468.9" y="770" width="13.5" height="12.2" fill="#3d7fe0"/>
<circle cx="1472.3000000000002" cy="773.0" r="0.8" fill="#fff"/>
<circle cx="1475.6000000000001" cy="773.0" r="0.8" fill="#fff"/>
<circle cx="1478.9" cy="773.0" r="0.8" fill="#fff"/>
<circle cx="1472.3000000000002" cy="776.5" r="0.8" fill="#fff"/>
<circle cx="1475.6000000000001" cy="776.5" r="0.8" fill="#fff"/>
<circle cx="1478.9" cy="776.5" r="0.8" fill="#fff"/>
<circle cx="1472.3000000000002" cy="780.0" r="0.8" fill="#fff"/>
<circle cx="1475.6000000000001" cy="780.0" r="0.8" fill="#fff"/>
<circle cx="1478.9" cy="780.0" r="0.8" fill="#fff"/>
</g>
</g>
<g fill="#d9d9d9"><path d="M15.5 1051H33V1072H24V1060H15.5z"/><circle cx="39" cy="1055.3" r="4.3"/><path d="M45.5 1051H56.5L47.5 1072H38z"/></g>
</svg>
<div class="t" style="left:13.50px;top:14.16px;font-size:16px;color:#d9d9d9;font-weight:normal;letter-spacing:0.5px;-webkit-text-stroke:0.4px currentColor">ChartAnalysis_4 created with TradingView.com, Aug 09, 2025 13:07 UTC</div>
<div class="t" style="left:24.70px;top:49.06px;font-size:16.35px;color:#cfcfcf;font-weight:normal">Wormhole / US Dollar · 4h · COINBASE</div>
<div class="t" style="left:324.70px;top:49.06px;font-size:16.35px;color:#cfcfcf;font-weight:normal">O</div>
<div class="t" style="left:336.70px;top:49.06px;font-size:16.35px;color:#f23645;font-weight:normal;letter-spacing:0.65px">0.09235</div>
<div class="t" style="left:410.00px;top:49.06px;font-size:16.35px;color:#cfcfcf;font-weight:normal">H</div>
<div class="t" style="left:422.60px;top:49.06px;font-size:16.35px;color:#f23645;font-weight:normal;letter-spacing:0.65px">0.09290</div>
<div class="t" style="left:495.00px;top:49.06px;font-size:16.35px;color:#cfcfcf;font-weight:normal">L</div>
<div class="t" style="left:504.00px;top:49.06px;font-size:16.35px;color:#f23645;font-weight:normal;letter-spacing:0.65px">0.09216</div>
<div class="t" style="left:575.00px;top:49.06px;font-size:16.35px;color:#cfcfcf;font-weight:normal">C</div>
<div class="t" style="left:587.00px;top:49.06px;font-size:16.35px;color:#f23645;font-weight:normal;letter-spacing:0.65px">0.09216</div>
<div class="t" style="left:657.60px;top:49.06px;font-size:16.35px;color:#f23645;font-weight:normal;letter-spacing:0.45px">−0.00020 (−0.22%)</div>
<div class="t" style="left:24.70px;top:71.69px;font-size:16.9px;color:#cfcfcf;font-weight:normal">Supertrend (10, 3)</div>
<div class="t" style="left:171.70px;top:72.16px;font-size:16.35px;color:#4caf50;font-weight:normal;letter-spacing:0.65px">0.08239</div>
<div class="t" style="left:244.50px;top:70.42px;font-size:19px;color:#cfcfcf;font-weight:normal">⌀</div>
<div class="t" style="left:24.90px;top:813.27px;font-size:16.1px;color:#cfcfcf;font-weight:normal">DMI (14, 14)</div>
<div class="t" style="left:125.40px;top:813.27px;font-size:16.1px;color:#f50057;font-weight:normal">41.7571</div>
<div class="t" style="left:191.00px;top:813.27px;font-size:16.1px;color:#2962ff;font-weight:normal">41.2610</div>
<div class="t" style="left:259.00px;top:813.27px;font-size:16.1px;color:#ff6d00;font-weight:normal;letter-spacing:0.8px">6.2990</div>
<div class="t" style="right:38.05px;top:52.61px;font-size:17px;color:#b8b8b8;font-weight:normal;letter-spacing:0.45px;-webkit-text-stroke:0.12px currentColor">0.12000</div>
<div class="t" style="right:38.05px;top:108.61px;font-size:17px;color:#b8b8b8;font-weight:normal;letter-spacing:0.45px;-webkit-text-stroke:0.12px currentColor">0.11500</div>
<div class="t" style="right:38.05px;top:163.61px;font-size:17px;color:#b8b8b8;font-weight:normal;letter-spacing:0.45px;-webkit-text-stroke:0.12px currentColor">0.11000</div>
<div class="t" style="right:38.05px;top:218.61px;font-size:17px;color:#b8b8b8;font-weight:normal;letter-spacing:0.45px;-webkit-text-stroke:0.12px currentColor">0.10500</div>
<div class="t" style="right:38.05px;top:274.61px;font-size:17px;color:#b8b8b8;font-weight:normal;letter-spacing:0.45px;-webkit-text-stroke:0.12px currentColor">0.10000</div>
<div class="t" style="right:38.05px;top:330.61px;font-size:17px;color:#b8b8b8;font-weight:normal;letter-spacing:0.45px;-webkit-text-stroke:0.12px currentColor">0.09500</div>
<div class="t" style="right:38.05px;top:441.61px;font-size:17px;color:#b8b8b8;font-weight:normal;letter-spacing:0.45px;-webkit-text-stroke:0.12px currentColor">0.08500</div>
<div class="t" style="right:38.05px;top:552.61px;font-size:17px;color:#b8b8b8;font-weight:normal;letter-spacing:0.45px;-webkit-text-stroke:0.12px currentColor">0.07500</div>
<div class="t" style="right:38.05px;top:608.61px;font-size:17px;color:#b8b8b8;font-weight:normal;letter-spacing:0.45px;-webkit-text-stroke:0.12px currentColor">0.07000</div>
<div class="t" style="right:38.05px;top:663.61px;font-size:17px;color:#b8b8b8;font-weight:normal;letter-spacing:0.45px;-webkit-text-stroke:0.12px currentColor">0.06500</div>
<div class="t" style="right:38.05px;top:719.61px;font-size:17px;color:#b8b8b8;font-weight:normal;letter-spacing:0.45px;-webkit-text-stroke:0.12px currentColor">0.06000</div>
<div class="t" style="right:38.05px;top:775.61px;font-size:17px;color:#b8b8b8;font-weight:normal;letter-spacing:0.45px;-webkit-text-stroke:0.12px currentColor">0.05500</div>
<div class="t" style="right:38.05px;top:913.11px;font-size:17px;color:#b8b8b8;font-weight:normal;letter-spacing:0.45px;-webkit-text-stroke:0.12px currentColor">20.0000</div>
<div class="t" style="right:38.05px;top:362.11px;font-size:17px;color:#ffffff;font-weight:normal;letter-spacing:0.45px;-webkit-text-stroke:0.12px currentColor">0.09216</div>
<div class="t" style="right:33.55px;top:380.61px;font-size:17px;color:rgba(255,255,255,0.85);font-weight:normal;letter-spacing:0.45px;-webkit-text-stroke:0.12px currentColor">02:52:22</div>
<div class="t" style="right:38.05px;top:470.61px;font-size:17px;color:#ffffff;font-weight:normal;letter-spacing:0.45px;-webkit-text-stroke:0.12px currentColor">0.08239</div>
<div class="t" style="right:38.05px;top:496.11px;font-size:17px;color:#ffffff;font-weight:normal;letter-spacing:0.45px;-webkit-text-stroke:0.12px currentColor">0.08009</div>
<div class="t" style="right:38.05px;top:844.61px;font-size:17px;color:#ffffff;font-weight:normal;letter-spacing:0.45px;-webkit-text-stroke:0.12px currentColor">41.7571</div>
<div class="t" style="right:38.05px;top:867.61px;font-size:17px;color:#ffffff;font-weight:normal;letter-spacing:0.45px;-webkit-text-stroke:0.12px currentColor">41.2610</div>
<div class="t" style="right:47.55px;top:956.11px;font-size:17px;color:#ffffff;font-weight:normal;letter-spacing:0.45px;-webkit-text-stroke:0.12px currentColor">6.2990</div>
<div class="t" style="left:65.50px;transform:translateX(-50%);top:995.91px;font-size:17px;color:#b8b8b8;font-weight:normal;-webkit-text-stroke:0.12px currentColor">7</div>
<div class="t" style="left:138.50px;transform:translateX(-50%);top:995.91px;font-size:17px;color:#b8b8b8;font-weight:normal;-webkit-text-stroke:0.12px currentColor">9</div>
<div class="t" style="left:212.50px;transform:translateX(-50%);top:995.91px;font-size:17px;color:#b8b8b8;font-weight:normal;-webkit-text-stroke:0.12px currentColor">11</div>
<div class="t" style="left:286.50px;transform:translateX(-50%);top:995.91px;font-size:17px;color:#b8b8b8;font-weight:normal;-webkit-text-stroke:0.12px currentColor">13</div>
<div class="t" style="left:359.50px;transform:translateX(-50%);top:995.91px;font-size:17px;color:#b8b8b8;font-weight:normal;-webkit-text-stroke:0.12px currentColor">15</div>
<div class="t" style="left:433.50px;transform:translateX(-50%);top:995.91px;font-size:17px;color:#b8b8b8;font-weight:normal;-webkit-text-stroke:0.12px currentColor">17</div>
<div class="t" style="left:506.50px;transform:translateX(-50%);top:995.91px;font-size:17px;color:#b8b8b8;font-weight:normal;-webkit-text-stroke:0.12px currentColor">19</div>
<div class="t" style="left:580.50px;transform:translateX(-50%);top:995.91px;font-size:17px;color:#b8b8b8;font-weight:normal;-webkit-text-stroke:0.12px currentColor">21</div>
<div class="t" style="left:653.50px;transform:translateX(-50%);top:995.91px;font-size:17px;color:#b8b8b8;font-weight:normal;-webkit-text-stroke:0.12px currentColor">23</div>
<div class="t" style="left:727.50px;transform:translateX(-50%);top:995.91px;font-size:17px;color:#b8b8b8;font-weight:normal;-webkit-text-stroke:0.12px currentColor">25</div>
<div class="t" style="left:801.50px;transform:translateX(-50%);top:995.91px;font-size:17px;color:#b8b8b8;font-weight:normal;-webkit-text-stroke:0.12px currentColor">27</div>
<div class="t" style="left:874.50px;transform:translateX(-50%);top:995.91px;font-size:17px;color:#b8b8b8;font-weight:normal;-webkit-text-stroke:0.12px currentColor">29</div>
<div class="t" style="left:985.50px;transform:translateX(-50%);top:996.76px;font-size:16px;color:#b8b8b8;font-weight:bold;-webkit-text-stroke:0.12px currentColor">Aug</div>
<div class="t" style="left:1058.50px;transform:translateX(-50%);top:995.91px;font-size:17px;color:#b8b8b8;font-weight:normal;-webkit-text-stroke:0.12px currentColor">3</div>
<div class="t" style="left:1132.50px;transform:translateX(-50%);top:995.91px;font-size:17px;color:#b8b8b8;font-weight:normal;-webkit-text-stroke:0.12px currentColor">5</div>
<div class="t" style="left:1205.50px;transform:translateX(-50%);top:995.91px;font-size:17px;color:#b8b8b8;font-weight:normal;-webkit-text-stroke:0.12px currentColor">7</div>
<div class="t" style="left:1279.50px;transform:translateX(-50%);top:995.91px;font-size:17px;color:#b8b8b8;font-weight:normal;-webkit-text-stroke:0.12px currentColor">9</div>
<div class="t" style="left:1353.50px;transform:translateX(-50%);top:995.91px;font-size:17px;color:#b8b8b8;font-weight:normal;-webkit-text-stroke:0.12px currentColor">11</div>
<div class="t" style="left:1426.50px;transform:translateX(-50%);top:995.91px;font-size:17px;color:#b8b8b8;font-weight:normal;-webkit-text-stroke:0.12px currentColor">13</div>
<div class="t" style="left:65.60px;top:1048.30px;font-size:28px;color:#d9d9d9;font-weight:bold;letter-spacing:-0.2px">TradingView</div>
</body></html>
